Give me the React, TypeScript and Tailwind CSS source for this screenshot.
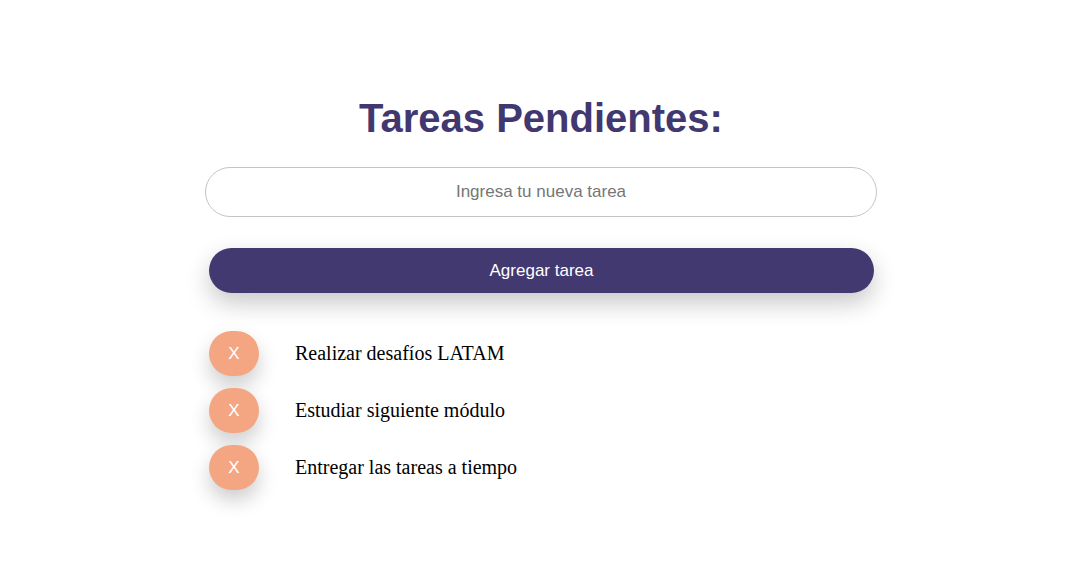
import { useState } from "react";

const initialTasks = [
  "Realizar desafíos LATAM",
  "Estudiar siguiente módulo",
  "Entregar las tareas a tiempo",
];

export default function App() {
  const [tasks, setTasks] = useState(initialTasks);
  const [text, setText] = useState("");

  const addTask = () => {
    if (!text.trim()) return;
    setTasks([...tasks, text.trim()]);
    setText("");
  };

  return (
    <main className="min-h-screen bg-white pr-[7px] font-['Liberation_Sans',Arial,sans-serif]">
      <div className="mx-auto w-[672px] pt-[95px]">
        <h1 className="text-center text-[40px] font-bold leading-[46px] text-[#41386f]">Tareas Pendientes:</h1>
        <input
          value={text}
          onChange={(e) => setText(e.target.value)}
          placeholder="Ingresa tu nueva tarea"
          className="mt-[26px] block h-[50px] w-full rounded-full border border-[#c4c4c4] bg-white px-6 text-center text-[17px] text-[#333] outline-none placeholder:text-[#767676]"
        />
        <button
          onClick={addTask}
          className="ml-[4px] mt-[31px] block h-[45px] w-[665px] rounded-full bg-[#433971] text-[17px] text-white shadow-[0_10px_24px_rgba(0,0,0,0.22)]"
        >
          Agregar tarea
        </button>
        <ul className="ml-[4px] mt-[38px] flex flex-col gap-[12px]">
          {tasks.map((task, i) => (
            <li key={i} className="flex items-center gap-[36px]">
              <button
                onClick={() => setTasks(tasks.filter((_, j) => j !== i))}
                className="h-[45px] w-[50px] shrink-0 rounded-full bg-[#f4a683] text-[17px] text-white shadow-[0_10px_20px_rgba(0,0,0,0.2)]"
              >
                X
              </button>
              <span className="-mt-[2px] font-['Liberation_Serif','Times_New_Roman',serif] text-[20px] text-black">{task}</span>
            </li>
          ))}
        </ul>
      </div>
    </main>
  );
}
